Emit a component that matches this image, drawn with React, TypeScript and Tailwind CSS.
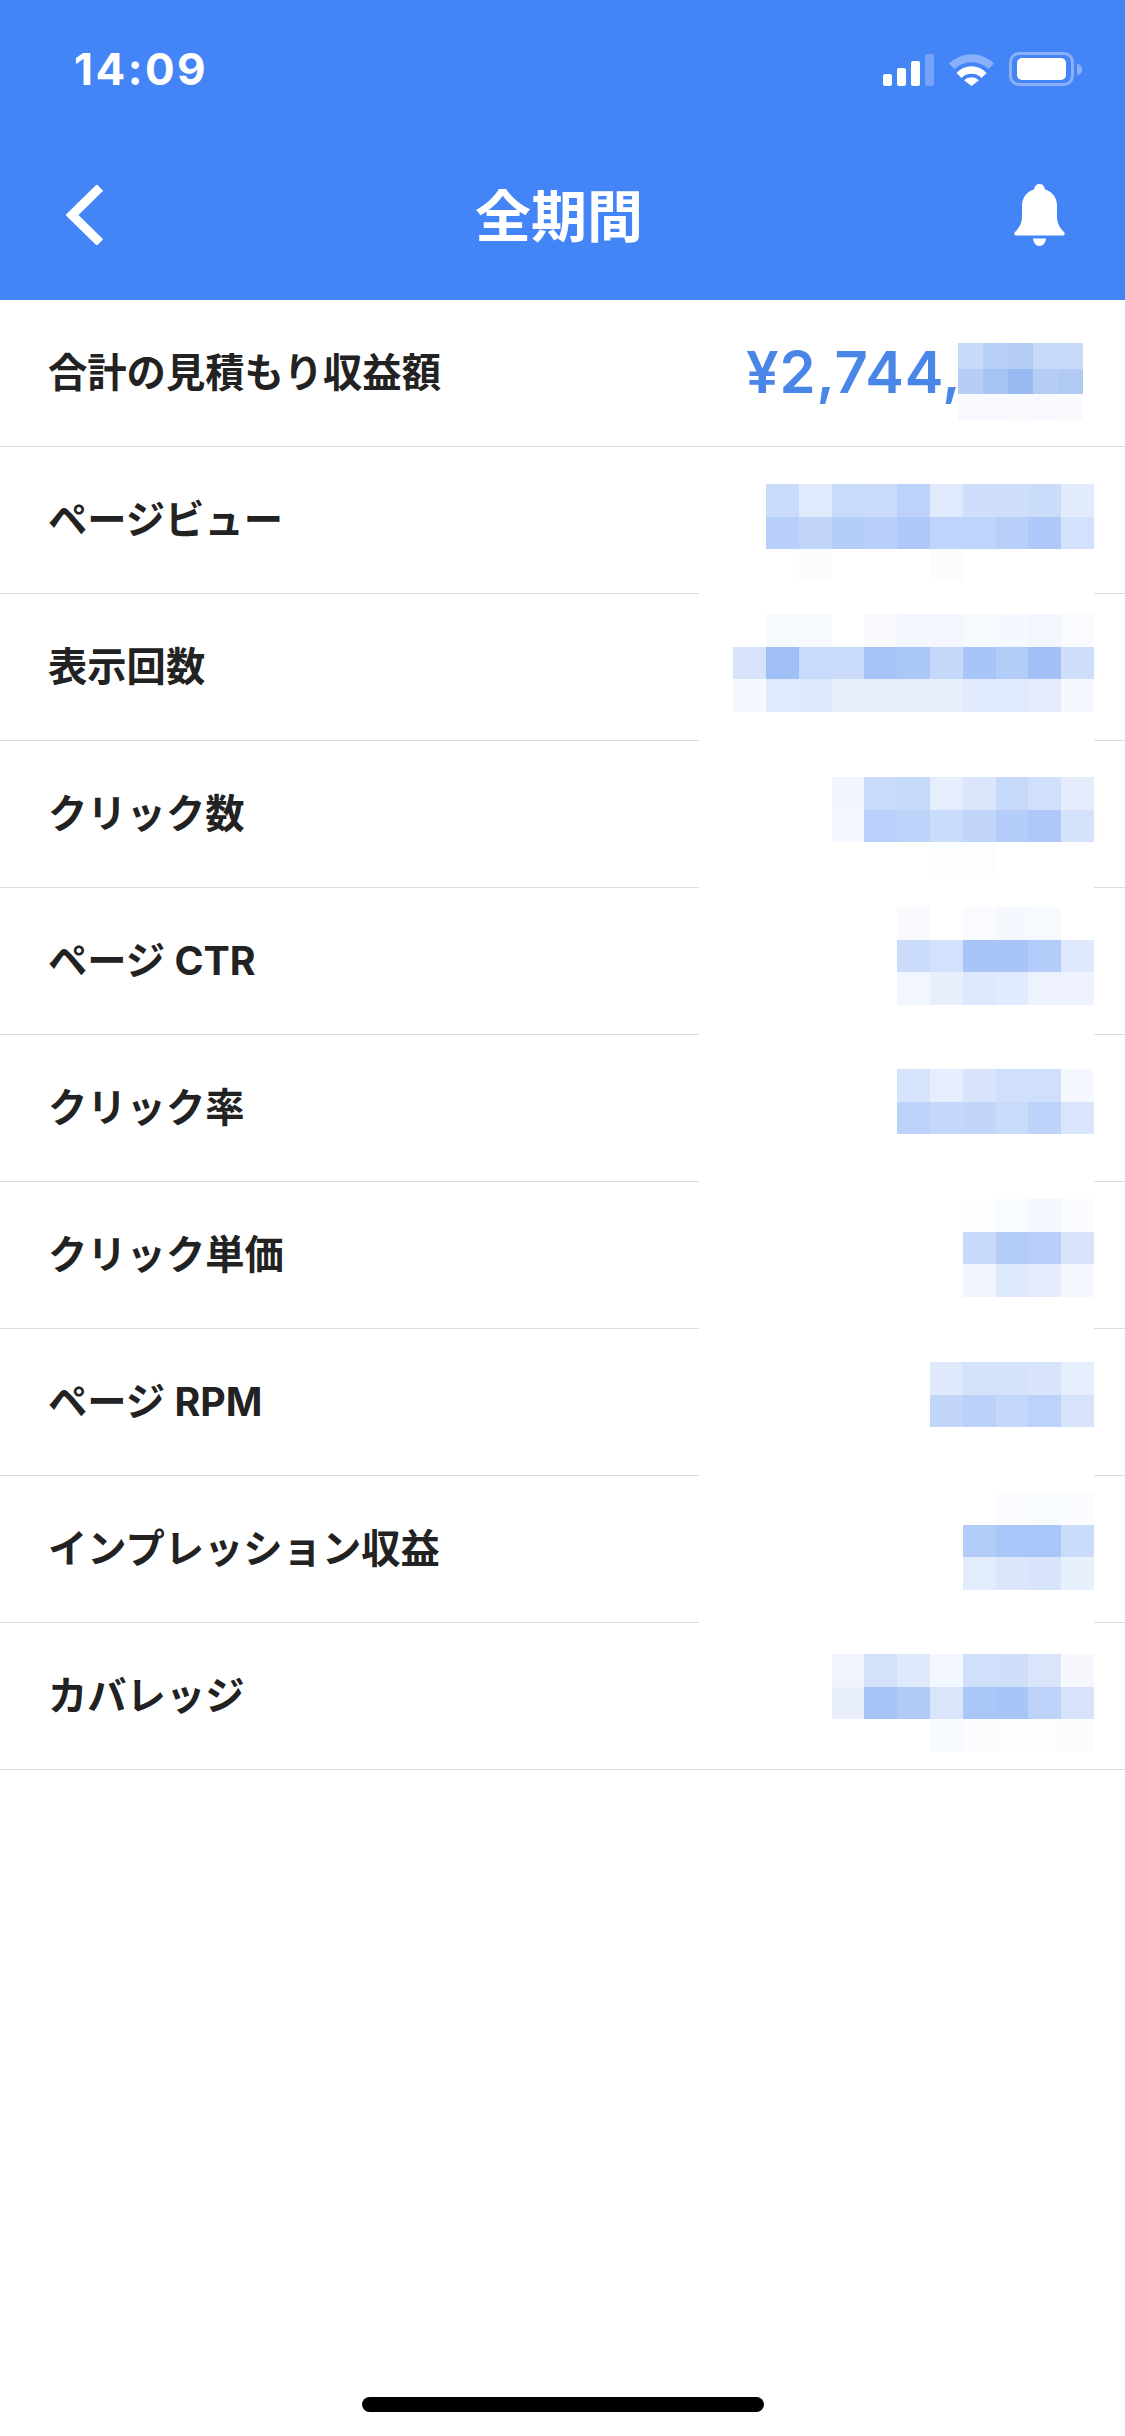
const F = "#ffffff";

type Metric = {
  label: string;
  top: string;
  cells: string[][];
};

const METRICS: Metric[] = [
  {
    label: "ページビュー",
    top: "top-[37px]",
    cells: [
      ["#c9dbfb", "#e0eafc", "#c9dbfb", "#cbdcfb", "#bcd2f9", "#e0eafc", "#cfdffb", "#cfdffb", "#cbdcfb", "#e2ebfc"],
      ["#b7cffa", "#c2d6fa", "#b5cdf9", "#b7cffa", "#adc8f9", "#bfd4fa", "#bfd4fa", "#b8cffa", "#aec8f9", "#d3e1fc"],
      [F, "#fbfcfe", F, F, F, "#fbfcfe", F, F, F, F],
    ],
  },
  {
    label: "表示回数",
    top: "top-[20px]",
    cells: [
      [F, "#f6f9fe", "#f6f9fe", F, "#f8fafe", "#f3f6fe", "#f3f6fe", "#f6f9fe", "#f5f8fe", "#f3f6fe", "#f9fbfe"],
      ["#d6e3fb", "#9fbff6", "#c9dbfb", "#cbdcfb", "#a6c4f7", "#aac7f7", "#c5d8fa", "#a7c5f7", "#b3ccf8", "#a2c0f6", "#cfdefb"],
      ["#f5f8fe", "#e0eafc", "#dee9fc", "#e7effc", "#e7effc", "#e7effc", "#e7effc", "#e0eafc", "#e0eafc", "#e4ecfc", "#f5f8fe"],
    ],
  },
  {
    label: "クリック数",
    top: "top-[36px]",
    cells: [
      ["#f0f5fe", "#c9dcfb", "#c5d9fb", "#e6eefd", "#dbe6fc", "#c6d9fb", "#cfdffc", "#e5edfd"],
      ["#f4f7fe", "#b9d1fa", "#bcd3fa", "#cadcfb", "#c1d6fa", "#b4cdf9", "#adc8f9", "#d4e2fc"],
      [F, F, F, "#fbfdfe", "#fbfdfe", F, F, F],
    ],
  },
  {
    label: "ページ CTR",
    top: "top-[19px]",
    cells: [
      ["#f8fafe", F, "#fafbfe", "#f5f8fe", "#f6f9fe", F],
      ["#cbdcfb", "#d3e1fc", "#a8c5f8", "#a8c5f8", "#b3ccf9", "#dfe9fc"],
      ["#f2f6fe", "#e7effd", "#dee8fc", "#e2ebfd", "#edf2fe", "#edf2fe"],
    ],
  },
  {
    label: "クリック率",
    top: "top-[34px]",
    cells: [
      ["#d6e3fc", "#e6eefd", "#d8e4fc", "#cfdffc", "#cfdffc", "#f5f8fe"],
      ["#bcd2fa", "#c5d8fb", "#c2d6fa", "#c9dbfb", "#bdd3fa", "#d9e5fc"],
    ],
  },
  {
    label: "クリック単価",
    top: "top-[17px]",
    cells: [
      ["#fdfeff", "#f8fbff", "#f3f8fe", "#fafcff"],
      ["#c8daf9", "#b4cdf8", "#b6cef8", "#d8e3fb"],
      ["#f1f5fd", "#dfe9fc", "#e5edfd", "#f5f8fe"],
    ],
  },
  {
    label: "ページ RPM",
    top: "top-[33px]",
    cells: [
      ["#e0e9fc", "#d5e2fb", "#d5e2fb", "#d7e4fc", "#e6eefd"],
      ["#c2d6fa", "#bad1fa", "#c5d8fb", "#bbd2fa", "#d6e3fb"],
    ],
  },
  {
    label: "インプレッション収益",
    top: "top-[16px]",
    cells: [
      [F, "#fbfcff", "#f9fcff", "#fbfcff"],
      ["#b2ccf8", "#a9c6f8", "#a9c6f8", "#cbdcfa"],
      ["#e3ecfd", "#dbe6fb", "#d8e4fb", "#e9f0fd"],
    ],
  },
  {
    label: "カバレッジ",
    top: "top-[31px]",
    cells: [
      ["#f0f4fd", "#d3e1fa", "#dfe9fc", "#f2f6fe", "#d1e0fa", "#cfdffa", "#dae5fb", "#f6f8fe"],
      ["#e9f0fc", "#a6c4f6", "#b0cbf7", "#d9e5fb", "#abc7f7", "#a8c5f7", "#bcd2f9", "#d6e3fb"],
      [F, F, F, "#f7fafe", "#fbfcfe", "#fdfdfe", "#fdfdfe", "#fbfcfe"],
    ],
  },
];

const TOTAL_CELLS = [
  ["#c8daf8", "#b7cff5", "#b5cdf5", "#c8daf8", "#c8daf8"],
  ["#b6cef5", "#a6c4f3", "#98baf2", "#b5cdf4", "#b0caf4"],
  ["#f7f9fe", "#f7f9fe", "#f8fafe", "#f7f9fe", "#f8fafe"],
];

function Mosaic({
  cells,
  className,
  cellClass,
}: {
  cells: string[][];
  className: string;
  cellClass: string;
}) {
  return (
    <div className={`absolute flex flex-col ${className}`}>
      {cells.map((row, y) => (
        <div key={y} className="flex">
          {row.map((color, x) => (
            <div key={x} className={cellClass} style={{ backgroundColor: color }} />
          ))}
        </div>
      ))}
    </div>
  );
}

function StatusIcons() {
  return (
    <div className="flex items-end gap-[15px]">
      <div className="flex items-end gap-[5px]">
        <div className="h-[12px] w-[9px] rounded-[2px] bg-white" />
        <div className="h-[18px] w-[9px] rounded-[2px] bg-white" />
        <div className="h-[25px] w-[9px] rounded-[2px] bg-white" />
        <div className="h-[32px] w-[9px] rounded-[2px] bg-[#76a3f9]" />
      </div>
      <svg width="45" height="33" viewBox="0 0 45 33">
        <path d="M0 10.5A32 32 0 0 1 45 10.5L39.5 16A25 25 0 0 0 5.5 16Z" fill="#8ab0fa" />
        <path d="M7.5 20A20 20 0 0 1 37.5 20L32.5 25A14 14 0 0 0 12.5 25Z" fill="#fff" />
        <path d="M15 27.3A11 11 0 0 1 30 27.3L22.5 33Z" fill="#fff" />
      </svg>
      <div className="flex items-center gap-[3px]">
        <div className="flex h-[34px] w-[65px] items-center justify-center rounded-[10px] border-[3px] border-[#8ab0fa]">
          <div className="h-[22px] w-[49px] rounded-[5px] bg-white" />
        </div>
        <div className="h-[11px] w-[5px] rounded-r-full bg-[#8ab0fa]" />
      </div>
    </div>
  );
}

function Divider({ gap }: { gap: boolean }) {
  if (!gap) return <div className="h-px w-full bg-[#dcdcdc]" />;
  return (
    <div className="flex h-px w-full justify-between">
      <div className="w-[699px] bg-[#dcdcdc]" />
      <div className="w-[31px] bg-[#dcdcdc]" />
    </div>
  );
}

export default function App() {
  const labelClass =
    "text-[39.3px] leading-none font-bold text-[#222222] [font-family:Inter,'Noto_Sans_CJK_JP',sans-serif]";

  return (
    <div className="flex min-h-[2436px] flex-col bg-white">
      <header className="flex h-[300px] flex-col bg-[#4385f6] text-white">
        <div className="flex h-[138px] items-center justify-between pr-[43px] pl-[74px]">
          <span className="text-[44px] leading-none font-bold tracking-[2.5px] [font-family:Inter,sans-serif]">
            14:09
          </span>
          <StatusIcons />
        </div>
        <div className="flex h-[154px] items-center justify-between pr-[60px] pl-[66px]">
          <svg width="38" height="60" viewBox="0 0 38 60" fill="none">
            <path d="M34 2.5L6 30L34 57.5" stroke="#fff" strokeWidth="9" />
          </svg>
          <h1 className="-mt-[5px] text-[56px] leading-none font-bold [font-family:'Noto_Sans_CJK_JP',sans-serif]">
            全期間
          </h1>
          <svg width="51" height="62" viewBox="0 0 51 62" fill="#fff">
            <path d="M25.5 0C22.5 0 20.5 2 20 5.5C12 8 8 14 8 22L8 32C8 40 5 44 1 48C0 49 0 51.5 2 51.5L49 51.5C51 51.5 51 49 50 48C46 44 43 40 43 32L43 22C43 14 39 8 31 5.5C30.5 2 28.5 0 25.5 0Z" />
            <path d="M19 54.5L32 54.5C31.5 59 29 62 25.5 62C22 62 19.5 59 19 54.5Z" />
          </svg>
        </div>
      </header>

      <main>
        <div className="relative flex h-[147px] flex-col">
          <div className="flex flex-1 items-center pb-[1px] pl-[48px]">
            <span className={labelClass}>合計の見積もり収益額</span>
          </div>
          <span className="absolute top-[43px] left-[746px] text-[58px] leading-none font-semibold tracking-[0.8px] whitespace-nowrap text-[#4a86e8] [font-family:Inter,sans-serif]">
            ¥2,744,
          </span>
          <Mosaic
            cells={TOTAL_CELLS}
            className="top-[43px] right-[42px]"
            cellClass="h-[25.7px] w-[25px]"
          />
          <Divider gap={false} />
        </div>

        {METRICS.map((metric, i) => (
          <div key={metric.label} className="relative flex h-[147px] flex-col">
            <div className="flex flex-1 items-center pb-[1px] pl-[48px]">
              <span className={labelClass}>{metric.label}</span>
            </div>
            <Mosaic
              cells={metric.cells}
              className={`right-[31px] ${metric.top}`}
              cellClass="h-[32.5px] w-[32.8px]"
            />
            <Divider gap={i < METRICS.length - 1} />
          </div>
        ))}
      </main>

      <div className="mt-auto flex justify-center pb-[24px]">
        <div className="h-[15px] w-[402px] rounded-[8px] bg-black" />
      </div>
    </div>
  );
}
